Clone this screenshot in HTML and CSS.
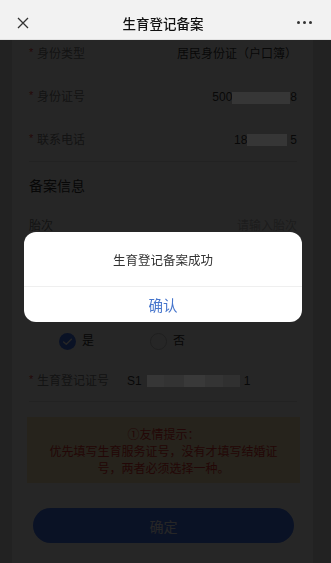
FILE: index.html
```html
<!DOCTYPE html>
<html lang="zh-CN">
<head>
<meta charset="utf-8">
<title>生育登记备案</title>
<link rel="stylesheet" href="styles.css">
</head>
<body>
<header class="nav">
  <svg class="nav-close" width="12" height="12" viewBox="0 0 12 12"><path d="M1 1L11 11M11 1L1 11" stroke="#333" stroke-width="1.3" fill="none"/></svg>
  <div class="nav-title">生育登记备案</div>
  <div class="nav-more"><i></i><i></i><i></i></div>
</header>
<main class="page">
  <section class="card">
    <div class="group">
      <div class="row"><span class="label"><em class="req">*</em>身份类型</span><span class="value">居民身份证（户口簿）</span></div>
      <div class="row"><span class="label"><em class="req">*</em>身份证号</span><span class="value">500<span class="redact redact-id"></span>8</span></div>
      <div class="row"><span class="label"><em class="req">*</em>联系电话</span><span class="value">18<span class="redact redact-tel"></span>5</span></div>
    </div>
    <h2 class="heading">备案信息</h2>
    <div class="row"><span class="label">胎次</span><span class="placeholder">请输入胎次</span></div>
    <div class="row"><span class="label"><em class="req">*</em>末次月经</span><span class="placeholder">请选择</span></div>
    <div class="band"><span class="label"><em class="req">*</em>是否持有生育登记证</span></div>
    <div class="radios">
      <label class="option"><span class="radio checked"><svg width="17" height="17" viewBox="0 0 17 17"><path d="M4.6 8.9L7.3 11.3L12.4 6.2" stroke="#fff" stroke-width="1.4" fill="none" stroke-linecap="round" stroke-linejoin="round"/></svg></span>是</label>
      <label class="option"><span class="radio"></span>否</label>
    </div>
    <div class="row row-cert"><span class="label"><em class="req">*</em>生育登记证号</span><span class="cert">S1<span class="redact redact-cert"></span>1</span></div>
    <div class="tip">
      <p>①友情提示：</p>
      <p>优先填写生育服务证号，没有才填写结婚证号，两者必须选择一种。</p>
    </div>
    <button class="submit" type="button">确定</button>
  </section>
</main>
<div class="mask"></div>
<div class="dialog">
  <div class="dialog-msg">生育登记备案成功</div>
  <div class="dialog-btn">确认</div>
</div>
</body>
</html>
```

FILE: styles.css
```css
* { box-sizing: border-box; margin: 0; padding: 0; }
html, body { width: 331px; height: 563px; overflow: hidden; }
body {
  background: #e0e0e5;
  font-family: "Liberation Sans", "Noto Sans CJK SC", sans-serif;
  font-size: 12px;
  color: #333;
}

.nav {
  position: fixed;
  top: 0; left: 0; right: 0;
  height: 40px;
  padding: 6px 19px 0 17px;
  display: flex;
  align-items: center;
  background: #f2f2f2;
  border-bottom: 1px solid #e2e2e2;
  z-index: 30;
}
.nav-close { display: block; flex: none; }
.nav-title {
  flex: 1;
  text-align: center;
  font-family: "Noto Sans CJK SC", sans-serif;
  font-size: 13.5px;
  font-weight: 500;
  line-height: 20px;
  color: #111;
}
.nav-more { display: flex; gap: 3px; flex: none; }
.nav-more i { display: block; width: 3px; height: 3px; border-radius: 50%; background: #333; }

.page { padding-top: 33px; }
.card {
  margin-left: 12px;
  width: 301px;
  background: #fff;
  padding: 0 16px 40px 17px;
}

.row {
  height: 43px;
  display: flex;
  align-items: center;
  justify-content: space-between;
  line-height: 17px;
}
.group { border-bottom: 1px solid #e2e2e2; }
.group .row:last-child { height: 42px; }

.label { display: flex; align-items: center; color: #808080; }
.req {
  font-style: normal;
  color: #f03a3a;
  width: 8px;
  font-size: 11px;
  line-height: 17px;
  align-self: flex-start;
  margin-top: -2px;
}
.value { display: flex; align-items: center; color: #3a3a3a; }
.placeholder { color: #bbb; }

/* privacy redaction painted over the dimmed page */
.redact {
  display: inline-block;
  position: relative;
  z-index: 15;
  height: 12px;
  background: #363636;
}
.redact-id { width: 58px; }
.redact-tel { width: 40px; margin-right: 3px; }
.redact-cert {
  width: 93px;
  margin: 0 4px 0 5px;
  background: linear-gradient(90deg, #363636 0 18%, #333 18% 40%, #393939 40% 62%, #343434 62% 82%, #303030 82%);
}

.heading {
  height: 43px;
  padding-top: 2px;
  display: flex;
  align-items: center;
  font-size: 14px;
  font-weight: normal;
  color: #333;
  font-family: "Noto Sans CJK SC", sans-serif;
}

.band {
  height: 30px;
  margin: 0 -16px 0 -17px;
  padding-left: 17px;
  display: flex;
  align-items: center;
  background: #fff;
}

.radios {
  height: 40px;
  display: flex;
  align-items: center;
  gap: 56px;
  padding-left: 30px;
}
.option { display: flex; align-items: center; gap: 6px; color: #333; line-height: 17px; }
.radio {
  width: 17px; height: 17px;
  border-radius: 50%;
  border: 1px solid #c8c8c8;
  background: #fff;
  display: block;
}
.radio.checked { border: none; background: #4677f5; }
.radio svg { display: block; }

.row-cert {
  height: 41px;
  justify-content: flex-start;
  border-bottom: 1px solid #e2e2e2;
}
.cert { margin-left: 18px; display: flex; align-items: center; color: #3a3a3a; }

.tip {
  margin: 15px -3px 0 -2px;
  padding: 8px 20px 7px;
  background: #fae8b8;
  color: #e8342f;
  text-align: center;
  line-height: 17px;
  font-family: "Noto Sans CJK SC", sans-serif;
}

.submit {
  display: block;
  margin: 25px 3px 0 4px;
  width: calc(100% - 7px);
  height: 35px;
  border: none;
  border-radius: 18px;
  background: #4677f5;
  color: #fff;
  font-family: "Noto Sans CJK SC", sans-serif;
  font-size: 14px;
}

.mask {
  position: fixed;
  top: 40px; left: 0; right: 0; bottom: 0;
  background: rgba(0, 0, 0, 0.85);
  z-index: 10;
}
.dialog {
  position: fixed;
  left: 24px;
  top: 232px;
  width: 278px;
  background: #fff;
  border-radius: 12px;
  overflow: hidden;
  z-index: 20;
  font-family: "Noto Sans CJK SC", sans-serif;
}
.dialog-msg {
  height: 55px;
  display: flex;
  align-items: center;
  justify-content: center;
  font-size: 12.5px;
  color: #333;
  border-bottom: 1px solid #efefef;
}
.dialog-btn {
  height: 35px;
  display: flex;
  align-items: center;
  justify-content: center;
  font-size: 14.5px;
  color: #4675cc;
}
```
